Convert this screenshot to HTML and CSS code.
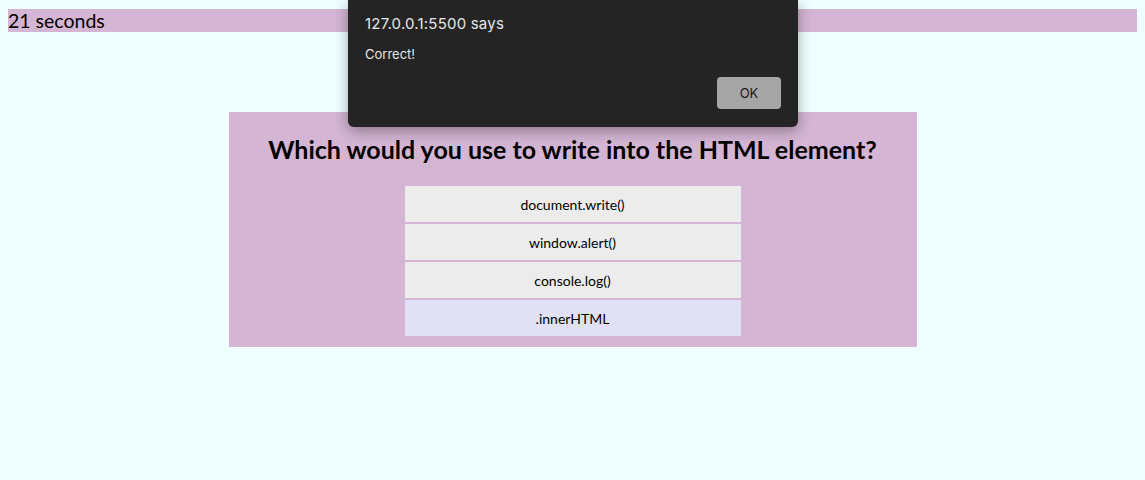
FILE: index.html
```html
<!DOCTYPE html>
<html>
<head>
<meta charset="utf-8">
<link rel="stylesheet" href="styles.css">
</head>
<body>
<div class="timer">21 seconds</div>
<main class="quiz">
  <h2 class="question">Which would you use to write into the HTML element?</h2>
  <div class="choices">
    <button class="choice">document.write()</button>
    <button class="choice">window.alert()</button>
    <button class="choice">console.log()</button>
    <button class="choice chosen">.innerHTML</button>
  </div>
</main>
<div class="dialog">
  <div class="dialog-title">127.0.0.1:5500 says</div>
  <div class="dialog-msg">Correct!</div>
  <div class="dialog-actions"><button class="ok">OK</button></div>
</div>
</body>
</html>
```
FILE: styles.css
```css
html, body {
  margin: 0;
  padding: 0;
}
body {
  background: #efffff;
  font-family: "Lato", sans-serif;
  padding: 9px 8px 8px;
  position: relative;
  min-height: 480px;
  box-sizing: border-box;
}
.timer {
  background: #d4b5d4;
  font-size: 19.5px;
  height: 23px;
  line-height: 23px;
  color: #000;
}
.quiz {
  width: 688px;
  margin: 80px auto 0;
  background: #d4b5d4;
  padding: 23px 0 11px;
  display: flex;
  flex-direction: column;
  align-items: center;
}
.question {
  margin: 0 0 23px;
  font-size: 25px;
  line-height: 28px;
  font-weight: bold;
  text-align: center;
}
.choices {
  display: flex;
  flex-direction: column;
  gap: 2px;
  width: 336px;
}
.choice {
  height: 36px;
  border: 0;
  background: #ececec;
  font-family: "Lato", sans-serif;
  font-size: 14px;
  color: #000;
  padding: 0;
}
.choice.chosen {
  background: #e1e1f6;
}
.dialog {
  position: absolute;
  left: 348px;
  top: 0;
  width: 450px;
  height: 127px;
  box-sizing: border-box;
  background: #242424;
  border-radius: 0 0 6px 6px;
  box-shadow: 0 4px 14px rgba(0,0,0,0.35);
  padding: 14px 17px 0;
  font-family: "Inter", "Roboto", sans-serif;
  color: #e6e6e6;
}
.dialog-title {
  font-size: 15px;
  line-height: 19px;
  letter-spacing: 0.2px;
}
.dialog-msg {
  font-size: 13px;
  line-height: 16px;
  margin-top: 13px;
}
.dialog-actions {
  display: flex;
  justify-content: flex-end;
  margin-top: 15px;
}
.ok {
  width: 64px;
  height: 32px;
  border: 0;
  border-radius: 4px;
  background: #a5a5a5;
  color: #1a1a1a;
  font-family: "Inter", "Roboto", sans-serif;
  font-size: 13px;
}
```
